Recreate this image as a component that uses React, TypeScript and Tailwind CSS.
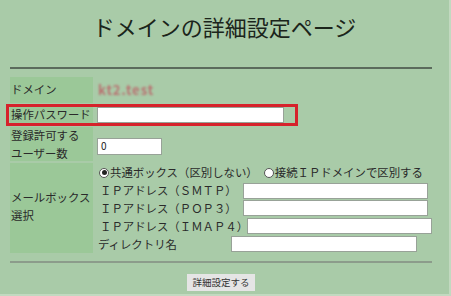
import React from 'react'

const font = { fontFamily: '"Noto Sans CJK JP", "Noto Sans", sans-serif' }

function TextBox({ className = '', value = '' }: { className?: string; value?: string }) {
  return (
    <div
      className={`h-[16px] bg-white border border-[#98a298] text-[10px] leading-[14px] pl-[3px] text-[#222] ${className}`}
    >
      {value}
    </div>
  )
}

function Radio({ checked }: { checked?: boolean }) {
  return (
    <span className="inline-flex w-[10px] h-[10px] rounded-full border border-[#555] bg-white items-center justify-center mr-[1px]">
      {checked && <span className="w-[5px] h-[5px] rounded-full bg-[#222]" />}
    </span>
  )
}

export default function App() {
  return (
    <div className="w-[451px] h-[296px] bg-[#a9cba8] text-[#2a2a2a] overflow-hidden border-r-2 border-b-2 border-[#c2d9c0]" style={font}>
      {/* Title */}
      <h1 className="pt-[11px] text-center text-[22px] leading-[30px] text-[#1b251b]">
        ドメインの詳細設定ページ
      </h1>

      <div className="mx-[10px] w-[422px] mt-[26px] h-[2px] bg-[#5b6b5c]" />

      {/* Settings table */}
      <div className="ml-[10px] w-[422px] mt-[8px] flex flex-col gap-[2px] text-[11.4px] whitespace-nowrap">
        <div className="flex h-[26px] gap-[4px]">
          <div className="w-[83px] bg-[#9bc898] flex items-center pl-[1px]">ドメイン</div>
          <div className="flex items-center pl-[1px] text-[13px] font-bold text-[#b97070] blur-[0.8px] tracking-[1px]">
            kt2.test
          </div>
        </div>

        <div className="relative flex h-[20px] gap-[4px]">
          <div className="w-[83px] bg-[#9bc898] flex items-center pl-[1px]">操作パスワード</div>
          <div className="flex items-center">
            <TextBox className="w-[187px]" />
          </div>
          <div className="absolute left-[-4px] top-[-1px] w-[292px] h-[22px] border-[3px] border-[#d6222b]" />
        </div>

        <div className="flex h-[34px] gap-[4px]">
          <div className="w-[83px] bg-[#9bc898] flex flex-col justify-center pl-[1px] leading-[18px]">
            <span>登録許可する</span>
            <span>ユーザー数</span>
          </div>
          <div className="pt-[11px]">
            <TextBox className="w-[65px] h-[17px]" value="0" />
          </div>
        </div>

        <div className="flex h-[90px] gap-[4px]">
          <div className="w-[83px] bg-[#9bc898] flex flex-col justify-center pl-[1px] leading-[18px] pb-[4px]">
            <span>メールボックス</span>
            <span>選択</span>
          </div>
          <div className="flex flex-col pt-[1px]">
            <div className="h-[18px] flex items-center pl-[2px]">
              <Radio checked />
              <span>共通ボックス（区別しない）</span>
              <span className="ml-[6px] flex"><Radio /></span>
              <span>接続ＩＰドメインで区別する</span>
            </div>
            <div className="h-[18px] flex items-center pl-[3px]">
              <span className="w-[143px]">ＩＰアドレス（ＳＭＴＰ）</span>
              <TextBox className="w-[185px]" />
            </div>
            <div className="h-[18px] flex items-center pl-[3px]">
              <span className="w-[143px]">ＩＰアドレス（ＰＯＰ３）</span>
              <TextBox className="w-[185px]" />
            </div>
            <div className="h-[18px] flex items-center pl-[3px]">
              <span className="w-[147px]">ＩＰアドレス（ＩＭＡＰ４）</span>
              <TextBox className="w-[185px]" />
            </div>
            <div className="h-[18px] flex items-center pl-[1px]">
              <span className="w-[133px]">ディレクトリ名</span>
              <TextBox className="w-[186px]" />
            </div>
          </div>
        </div>

        <div className="mt-[6px] h-[2px] bg-[#8c9c8b]" />

        <div className="flex justify-center mt-[9px]">
          <button className="h-[17px] px-[5px] bg-[#e5e5e5] text-[9.5px] leading-[17px] text-[#333]">
            詳細設定する
          </button>
        </div>
      </div>
    </div>
  )
}
